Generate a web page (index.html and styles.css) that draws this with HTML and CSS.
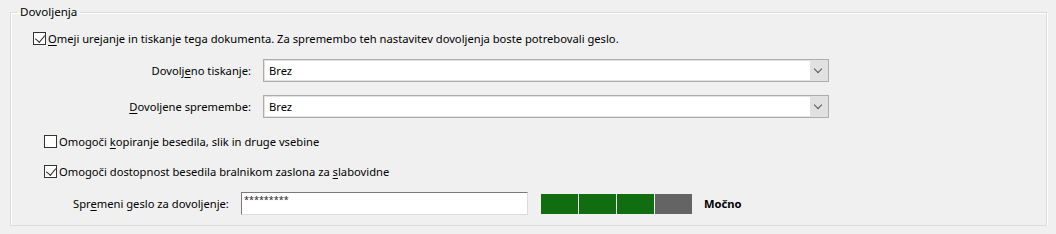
FILE: index.html
```html
<!DOCTYPE html>
<html lang="sl">
  <head>
    <meta charset="UTF-8" />
    <title>Dovoljenja</title>
    <link rel="stylesheet" href="styles.css">
  </head>
  <body>
    <fieldset class="group">
      <legend>Dovoljenja</legend>
      <label class="check check-main">
        <span class="box on"></span>
        <span><u>O</u>meji urejanje in tiskanje tega dokumenta. Za spremembo teh nastavitev dovoljenja boste potrebovali geslo.</span>
      </label>

      <div class="row row-combo">
        <span class="lbl">Dovolj<u>e</u>no tiskanje:</span>
        <div class="combo"><span class="val">Brez</span><span class="arrow"></span></div>
      </div>
      <div class="row row-combo">
        <span class="lbl"><u>D</u>ovoljene spremembe:</span>
        <div class="combo"><span class="val">Brez</span><span class="arrow"></span></div>
      </div>

      <label class="check check-sub">
        <span class="box"></span>
        <span>Omogoči <u>k</u>opiranje besedila, slik in druge vsebine</span>
      </label>
      <label class="check check-sub">
        <span class="box on"></span>
        <span>Omogoči dostopnost besedila bralnikom zaslona za <u>s</u>labovidne</span>
      </label>

      <div class="row row-pass">
        <span class="lbl-pass">Spr<u>e</u>meni geslo za dovoljenje:</span>
        <div class="pass">*********</div>
        <div class="meter">
          <span class="seg good"></span>
          <span class="seg good"></span>
          <span class="seg good"></span>
          <span class="seg"></span>
        </div>
        <b class="strength">Močno</b>
      </div>
    </fieldset>
  </body>
</html>
```

FILE: styles.css
```css
* {
  margin: 0;
  padding: 0;
  box-sizing: border-box;
}
body {
  background-color: #f0f0f0;
  font-family: "Noto Sans", "Open Sans", sans-serif;
  font-size: 11.2px;
  color: #000;
  padding: 4px 9px 0 10px;
}
u {
  text-decoration-thickness: 1px;
  text-underline-offset: 2px;
}
.group {
  border: 1px solid #dcdcdc;
  box-shadow: 1px 1px 0 #fff, inset 1px 1px 0 #fff;
  height: 222px;
  padding: 0 0 0 22px;
}
.group legend {
  padding: 0 3px;
  margin-left: -16px;
  line-height: 16px;
  font-size: 11.6px;
}
.check {
  display: flex;
  align-items: center;
  gap: 2px;
  height: 16px;
}
.check-main {
  margin-top: 10px;
}
.check-sub {
  margin-left: 11px;
  margin-top: 15px;
}
.check-sub + .check-sub {
  margin-top: 14px;
}
.box {
  width: 13px;
  height: 13px;
  border: 1px solid #333;
  background: #fff;
  position: relative;
  flex: none;
}
.box.on::after {
  content: "";
  position: absolute;
  left: 3px;
  top: 0px;
  width: 5px;
  height: 8px;
  border: solid #333;
  border-width: 0 1px 1px 0;
  transform: rotate(40deg);
}
.row {
  display: flex;
  align-items: center;
}
.row-combo {
  margin-top: 13px;
  height: 23px;
}
.row-combo + .row-combo {
  margin-top: 13px;
}
.lbl {
  width: 230px;
  text-align: right;
  padding-right: 12px;
}
.combo {
  width: 566px;
  height: 23px;
  border: 1px solid #adadad;
  background: #e1e1e1;
  display: flex;
  align-items: center;
  padding: 1px;
}
.combo .val {
  flex: 1;
  height: 100%;
  background: #fff;
  padding-left: 4px;
  line-height: 19px;
}
.combo .arrow {
  width: 17px;
  height: 100%;
  position: relative;
}
.combo .arrow::after {
  content: "";
  position: absolute;
  left: 5px;
  top: 5px;
  width: 5px;
  height: 5px;
  border: solid #555;
  border-width: 0 1px 1px 0;
  transform: rotate(45deg);
}
.row-pass {
  margin-top: 13px;
  height: 23px;
}
.lbl-pass {
  margin-left: 40px;
  width: 168px;
}
.pass {
  width: 287px;
  height: 23px;
  background: #fff;
  border: 1px solid #7a7a7a;
  border-right-color: #dcdcdc;
  border-bottom-color: #dcdcdc;
  padding-left: 2px;
  font-size: 9px;
  line-height: 13px;
  color: #222;
}
.meter {
  display: flex;
  gap: 1px;
  margin-left: 13px;
}
.seg {
  width: 37px;
  height: 20px;
  background: #646464;
}
.seg.good {
  background: #106e10;
}
.strength {
  margin-left: 12px;
}
```
